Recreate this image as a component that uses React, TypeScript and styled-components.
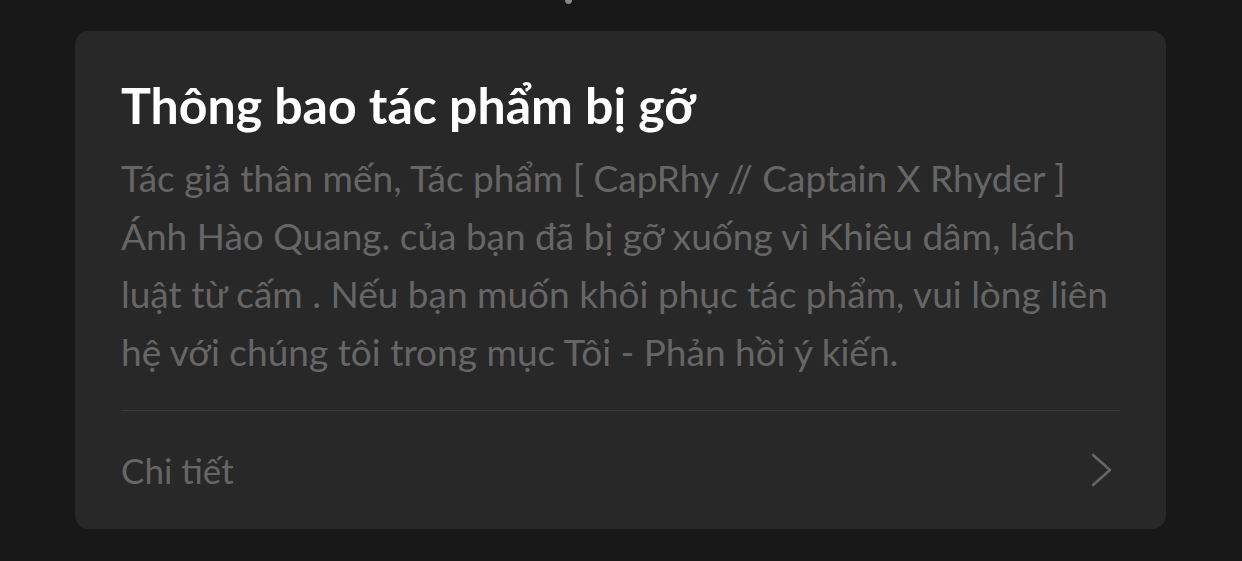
import React from "react";
import styled, { createGlobalStyle } from "styled-components";

const Global = createGlobalStyle`
  html, body { margin: 0; padding: 0; background: #181818; }
  body { font-family: Lato, "Noto Sans", sans-serif; }
`;

const Page = styled.div`
  width: 1242px;
  height: 561px;
  box-sizing: border-box;
  padding: 31px 76px 0 75px;
  background: #181818;
  position: relative;
  overflow: hidden;
`;

const PeekMark = styled.div`
  position: absolute;
  left: 565px;
  top: -4px;
  width: 7px;
  height: 8px;
  border-radius: 50%;
  background: #8a8a8a;
`;

const Card = styled.section`
  background: #282828;
  border-radius: 14px;
  height: 498px;
  box-sizing: border-box;
  padding: 45px 46px 0 46px;
  display: flex;
  flex-direction: column;
`;

const Title = styled.h1`
  margin: 0;
  color: #ffffff;
  font-size: 50px;
  line-height: 58px;
  font-weight: 700;
  white-space: nowrap;
`;

const Body = styled.p`
  margin: 15px 0 0;
  color: #666666;
  font-size: 37px;
  line-height: 58px;
  font-weight: 400;
  white-space: nowrap;
`;

const Divider = styled.hr`
  border: none;
  height: 1px;
  background: #3a3a3a;
  margin: 29px 0 0;
`;

const DetailRow = styled.div`
  display: flex;
  align-items: center;
  justify-content: space-between;
  height: 118px;
  color: #666666;
  font-size: 35px;
`;

const Chevron = styled.svg`
  width: 26px;
  height: 34px;
  margin-right: 5px;
`;

export default function App() {
  return (
    <>
      <Global />
      <Page>
        <PeekMark />
        <Card>
          <Title>Thông bao tác phẩm bị gỡ</Title>
          <Body>
            Tác giả thân mến, Tác phẩm [ CapRhy // Captain X Rhyder ]
            <br />
            Ánh Hào Quang. của bạn đã bị gỡ xuống vì Khiêu dâm, lách
            <br />
            luật từ cấm . Nếu bạn muốn khôi phục tác phẩm, vui lòng liên
            <br />
            hệ với chúng tôi trong mục Tôi - Phản hồi ý kiến.
          </Body>
          <Divider />
          <DetailRow>
            <span>Chi tiết</span>
            <Chevron viewBox="0 0 26 34" fill="none">
              <path d="M4 2 L21 17 L4 32" stroke="#666666" strokeWidth="2.6" strokeLinecap="round" strokeLinejoin="round" />
            </Chevron>
          </DetailRow>
        </Card>
      </Page>
    </>
  );
}
